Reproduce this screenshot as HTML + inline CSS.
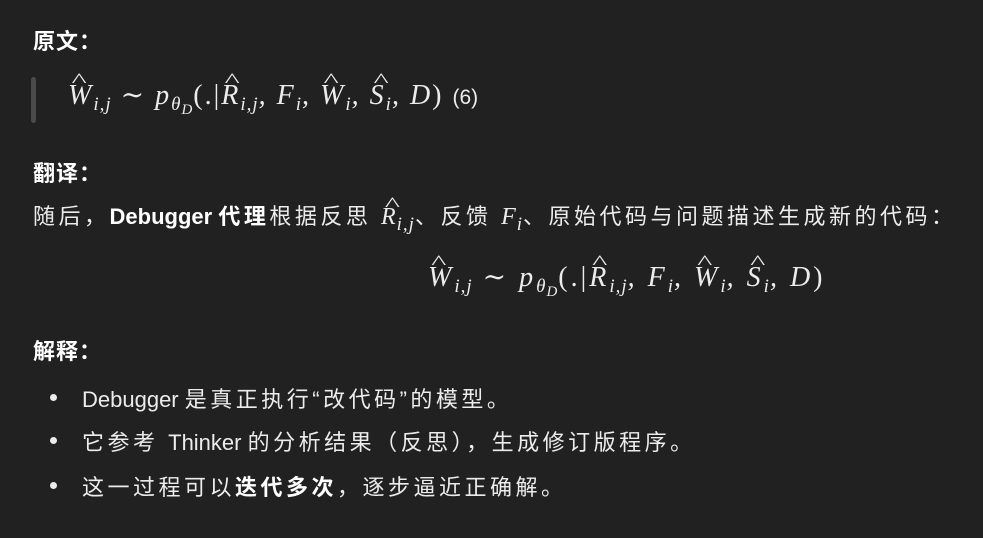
<!DOCTYPE html>
<html><head><meta charset="utf-8"><style>
body{margin:0;width:983px;height:538px;background:#212121;color:#ececec;font-family:"Liberation Sans","Noto Sans CJK SC",sans-serif;font-size:22px;letter-spacing:3.5px;overflow:hidden;position:relative}
.a{position:absolute;white-space:nowrap}
.l{letter-spacing:0}
b{font-weight:700;color:#fff}
.m{font-family:"Liberation Serif","DejaVu Serif",serif;font-style:italic;font-size:28px;letter-spacing:3px}
.m sub{font-size:19px;vertical-align:-6px;letter-spacing:1px}
.r{font-style:normal}
.h{position:relative;display:inline-block}
.h:before{content:"^";position:absolute;left:7px;top:-10px;font-style:normal;font-size:20px;transform:scaleX(1.6)}
.dot{position:absolute;width:7px;height:7px;border-radius:50%;background:#ececec;left:50px}
</style></head><body>
<div class="a" style="left:33px;top:24px;letter-spacing:1px"><b>原文：</b></div>
<div class="a" style="left:31px;top:77px;width:5px;height:46px;background:#4a4a4a;border-radius:3px"></div>
<div class="a m" style="left:68px;top:78px;letter-spacing:2px"><span class="h">W</span><sub>i,j</sub> <span class="r">∼</span> p<sub>θ<sub style="font-size:15px;vertical-align:-4px">D</sub></sub><span class="r">(.|</span><span class="h">R</span><sub>i,j</sub>, F<sub>i</sub>, <span class="h">W</span><sub>i</sub>, <span class="h">S</span><sub>i</sub>, D<span class="r">)</span> <span style="font-family:'Liberation Sans',sans-serif;font-style:normal;font-size:21px;letter-spacing:0">(6)</span></div>
<div class="a" style="left:33px;top:156px;letter-spacing:1px"><b>翻译：</b></div>
<div class="a" style="left:33px;top:199px">随后，<b class="l">Debugger </b><b>代理</b>根据反思 <span class="m" style="font-size:24px;letter-spacing:1px"><span class="h">R</span><sub>i,j</sub></span>、反馈 <span class="m" style="font-size:24px;letter-spacing:1px">F<sub>i</sub></span>、原始代码与问题描述生成新的代码：</div>
<div class="a m" style="left:428px;top:260px"><span class="h">W</span><sub>i,j</sub> <span class="r">∼</span> p<sub>θ<sub style="font-size:15px;vertical-align:-4px">D</sub></sub><span class="r">(.|</span><span class="h">R</span><sub>i,j</sub>, F<sub>i</sub>, <span class="h">W</span><sub>i</sub>, <span class="h">S</span><sub>i</sub>, D<span class="r">)</span></div>
<div class="a" style="left:33px;top:334px;letter-spacing:1px"><b>解释：</b></div>
<div class="dot" style="top:394px"></div>
<div class="a" style="left:82px;top:382px"><span class="l">Debugger </span>是真正执行“改代码”的模型。</div>
<div class="dot" style="top:437px"></div>
<div class="a" style="left:82px;top:425px">它参考 <span class="l">Thinker </span>的分析结果（反思），生成修订版程序。</div>
<div class="dot" style="top:482px"></div>
<div class="a" style="left:82px;top:470px">这一过程可以<b>迭代多次</b>，逐步逼近正确解。</div>
</body></html>
